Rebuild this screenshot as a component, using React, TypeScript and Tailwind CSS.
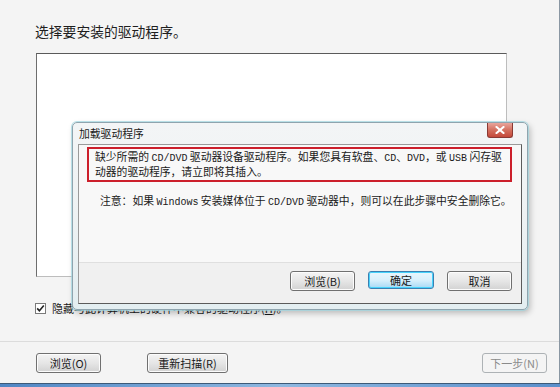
import React from "react";

const A = ({ children }: { children: React.ReactNode }) => (
  <span className="font-['Liberation_Mono',monospace] text-[10px]">{children}</span>
);

const Btn = ({
  children,
  w,
  variant = "normal",
}: {
  children: React.ReactNode;
  w: string;
  variant?: "normal" | "default" | "disabled";
}) => {
  const base =
    "flex items-center justify-center rounded-[3px] border text-[11px] leading-none";
  if (variant === "disabled")
    return (
      <div className={`${base} ${w} h-[20px] border-[#adb2b5] bg-[#f4f4f4] text-[#8a8a8a]`}>
        {children}
      </div>
    );
  if (variant === "default")
    return (
      <div
        className={`${base} ${w} h-[18px] border-[#3c7fb1] bg-gradient-to-b from-[#eaf6fd] via-[#d9f0fc] to-[#a7d9f5] text-[#1a1a1a] shadow-[inset_0_0_0_1px_#48d3fc]`}
      >
        {children}
      </div>
    );
  return (
    <div
      className={`${base} ${w} h-[20px] border-[#707070] bg-gradient-to-b from-[#f4f4f4] via-[#e6e6e6] to-[#d2d2d2] text-[#1a1a1a] shadow-[inset_0_0_0_1px_#fcfcfc]`}
    >
      {children}
    </div>
  );
};

export default function App() {
  return (
    <div className="relative flex h-[387px] w-[560px] flex-col overflow-hidden bg-[#f4f4f4] font-['Noto_Sans_CJK_SC',sans-serif] text-[#1a1a1a]">
      <div className="flex flex-1 flex-col border-r border-[#8a97a3]">
        {/* main title */}
        <div className="pl-[35px] pt-[23px] text-[13.8px] leading-[17px] text-[#1e1e1e]">
          选择要安装的驱动程序。
        </div>
        {/* list box */}
        <div className="ml-[36px] mt-[13px] h-[224px] w-[471px] border border-[#bdbdbd] border-l-[#6d6d6d] border-t-[#5a5a5a] bg-white" />
        {/* checkbox */}
        <div className="ml-[35px] mt-[25px] flex items-center gap-[6px]">
          <div className="flex h-[11px] w-[11px] items-center justify-center border border-[#7a7a7a] bg-white">
            <svg width="9" height="9" viewBox="0 0 9 9">
              <path d="M1.2 4.4 L3.4 6.8 L7.8 1.6" fill="none" stroke="#222" strokeWidth="1.6" />
            </svg>
          </div>
          <span className="text-[11px] leading-[13px]">
            隐藏与此计算机上的硬件不兼容的驱动程序(<span className="underline">H</span>)。
          </span>
        </div>
        {/* separator */}
        <div className="mt-[26px] h-px bg-[#dcdcdc]" />
        {/* bottom buttons */}
        <div className="flex items-start pl-[36px] pr-[12px] pt-[11px]">
          <Btn w="w-[65px]">浏览(O)</Btn>
          <div className="ml-[46px]">
            <Btn w="w-[81px]">重新扫描(R)</Btn>
          </div>
          <div className="ml-auto">
            <Btn w="w-[65px]" variant="disabled">
              下一步(N)
            </Btn>
          </div>
        </div>
      </div>
      {/* window frame bottom */}
      <div className="h-px bg-[#3d5a78]" />
      <div className="h-[3px] bg-gradient-to-r from-[#4f86c4] via-[#8fb8e0] to-[#5a8fcb]" />

      {/* dialog */}
      <div className="absolute left-[72px] top-[122px] flex h-[188px] w-[456px] flex-col rounded-[5px] border border-[#8fa4ae] bg-gradient-to-b from-[#f3f5f6] via-[#eef2f3] to-[#e3eef1] shadow-[0_0_0_1px_rgba(160,215,225,0.7),2px_3px_6px_rgba(0,0,0,0.25)]">
        {/* title bar */}
        <div className="flex h-[21px] items-start">
          <div className="pl-[6px] pt-[4px] text-[10.8px] leading-[13px] text-[#1a1a1a]">加载驱动程序</div>
          <div className="ml-auto mr-[14px] flex h-[15px] w-[26px] items-center justify-center rounded-b-[3px] border border-t-0 border-[#8a3a34] bg-gradient-to-b from-[#e8a59c] via-[#d4705f] to-[#c4483a]">
            <svg width="10" height="8" viewBox="0 0 10 8">
              <path d="M1.5 1 L8.5 7 M8.5 1 L1.5 7" stroke="#fff" strokeWidth="2" strokeLinecap="square" />
              <path d="M1.5 1 L8.5 7 M8.5 1 L1.5 7" stroke="#fff" strokeWidth="1.4" />
            </svg>
          </div>
        </div>
        {/* inner panel */}
        <div className="mx-[5px] mb-[5px] flex flex-1 flex-col border border-[#5b5b5b] border-l-[#9a9a9a] border-t-[#9a9a9a]">
          <div className="flex flex-1 flex-col bg-[#f8f8f8]">
            <div className="ml-[8px] mr-[9px] mt-[2px] border-2 border-[#cc1f2b] pb-[3px] pl-[6px] pt-[1px] text-[10.8px] leading-[12px]">
              <div className="whitespace-nowrap">
                缺少所需的 <A>CD/DVD</A> 驱动器设备驱动程序。如果您具有软盘、<A>CD</A>、<A>DVD</A>，或 <A>USB</A> 闪存驱
              </div>
              <div className="whitespace-nowrap">动器的驱动程序，请立即将其插入。</div>
            </div>
            <div className="ml-[21px] mt-[12px] whitespace-nowrap text-[10.8px] leading-[12px]">
              注意：如果 <A>Windows</A> 安装媒体位于 <A>CD/DVD</A> 驱动器中，则可以在此步骤中安全删除它。
            </div>
          </div>
          <div className="flex h-[41px] items-start justify-end gap-[13px] border-t border-[#dfdfdf] bg-[#f0f0f0] pr-[9px] pt-[8px]">
            <Btn w="w-[65px]">浏览(B)</Btn>
            <Btn w="w-[66px]" variant="default">
              确定
            </Btn>
            <Btn w="w-[65px]">取消</Btn>
          </div>
        </div>
      </div>
    </div>
  );
}
